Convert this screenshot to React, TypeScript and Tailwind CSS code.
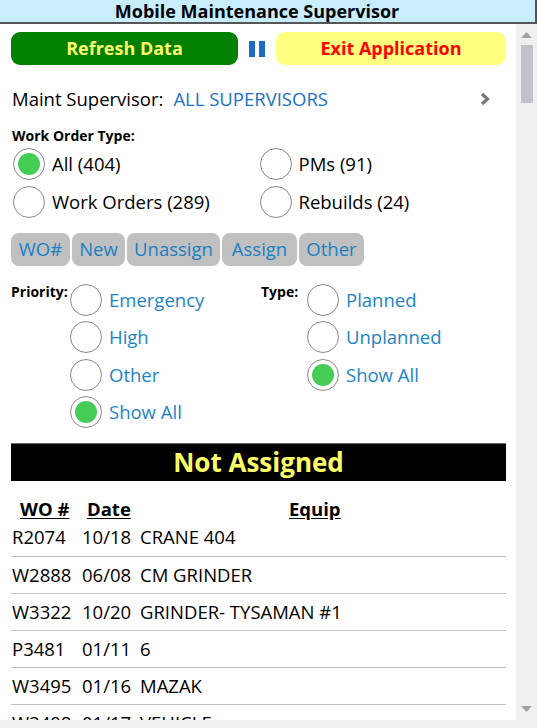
import { useState } from "react";

const font = { fontFamily: '"Open Sans", "Noto Sans", sans-serif' };

function Radio({ checked, label, blue, tall }: { checked?: boolean; label: string; blue?: boolean; tall?: boolean }) {
  return (
    <div className={`flex items-center ${tall ? "h-[38px]" : "h-[37.5px]"}`}>
      <div className="flex h-[32px] w-[32px] shrink-0 items-center justify-center rounded-full border-[1.5px] border-[#8a8a8a] bg-white">
        {checked && <div className="h-[22px] w-[22px] rounded-full bg-[#44cc55]"></div>}
      </div>
      <span className={`ml-[7px] text-[18.5px] ${blue ? "text-[#1c84c6]" : "text-black"}`}>{label}</span>
    </div>
  );
}

const rows = [
  ["R2074", "10/18", "CRANE 404"],
  ["W2888", "06/08", "CM GRINDER"],
  ["W3322", "10/20", "GRINDER- TYSAMAN #1"],
  ["P3481", "01/11", "6"],
  ["W3495", "01/16", "MAZAK"],
  ["W3498", "01/17", "VEHICLE"],
];

export default function App() {
  const [woType, setWoType] = useState("All");

  return (
    <div className="flex h-[728px] w-[537px] flex-col overflow-hidden bg-white" style={font}>
      {/* title bar */}
      <div className="flex h-[24px] shrink-0 items-center justify-center border-b-2 border-r-2 border-[#555] bg-[#c8eefc] pr-[21px]">
        <span className="text-[18px] font-bold leading-none text-black">Mobile Maintenance Supervisor</span>
      </div>

      <div className="flex min-h-0 flex-1">
        <div className="min-w-0 flex-1 overflow-hidden pl-[11px] pr-[10px]">
          {/* top buttons */}
          <div className="mt-[8px] flex h-[33px] items-center">
            <button className="h-full w-[227px] rounded-[9px] bg-[#008000] text-[18px] font-bold text-[#ffff66]">Refresh Data</button>
            <div className="mx-[11px] flex h-[16px] gap-[4px]">
              <div className="w-[6px] bg-[#1a6fc4]"></div>
              <div className="w-[6px] bg-[#1a6fc4]"></div>
            </div>
            <button className="h-full flex-1 rounded-[9px] bg-[#ffff80] text-[18px] font-bold text-[#ff0000]">Exit Application</button>
          </div>

          {/* supervisor */}
          <div className="mt-[20px] flex items-center pl-[1px]">
            <span className="text-[18.5px] text-black">Maint Supervisor:</span>
            <span className="ml-[10px] text-[18.5px] text-[#1a73c8]">ALL SUPERVISORS</span>
            <svg className="ml-auto mr-[16px]" width="10" height="14" viewBox="0 0 10 14">
              <path d="M2 2 L7.5 7 L2 12" stroke="#777" strokeWidth="3.2" fill="none" />
            </svg>
          </div>

          {/* work order type */}
          <div className="mt-[14px] pl-[1px] text-[14px] font-bold leading-[18px] text-black">Work Order Type:</div>
          <div className="grid grid-cols-2 pl-[2px]">
            {[
              ["All", "All (404)"],
              ["PMs", "PMs (91)"],
              ["WO", "Work Orders (289)"],
              ["Rebuilds", "Rebuilds (24)"],
            ].map(([k, l]) => (
              <div key={k} onClick={() => setWoType(k)}>
                <Radio tall checked={woType === k} label={l} />
              </div>
            ))}
          </div>

          {/* tab buttons */}
          <div className="mt-[12px] flex h-[33px] gap-[2px]">
            {["WO#", "New", "Unassign", "Assign", "Other"].map((t, i) => (
              <div
                key={t}
                className={`flex items-center justify-center rounded-[8px] bg-[#c0c0c0] text-[18.5px] text-[#1a80c4] ${
                  ["w-[59px]", "w-[53px]", "w-[93px]", "w-[75px]", "w-[65px]"][i]
                }`}
              >
                {t}
              </div>
            ))}
          </div>

          {/* priority / type */}
          <div className="mt-[18px] flex">
            <div className="flex w-[250px]">
              <span className="-mt-[1px] w-[59px] text-[14px] font-bold leading-[18px] text-black">Priority:</span>
              <div className="-mt-[3px]">
                <Radio label="Emergency" blue />
                <Radio label="High" blue />
                <Radio label="Other" blue />
                <Radio checked label="Show All" blue />
              </div>
            </div>
            <div className="flex">
              <span className="-mt-[1px] w-[46px] text-[14px] font-bold leading-[18px] text-black">Type:</span>
              <div className="-mt-[3px]">
                <Radio label="Planned" blue />
                <Radio label="Unplanned" blue />
                <Radio checked label="Show All" blue />
              </div>
            </div>
          </div>

          {/* not assigned */}
          <div className="mt-[12px] flex h-[38px] items-center justify-center border-t border-[#666] bg-black">
            <span className="text-[26px] font-bold leading-none text-[#ffff66]">Not Assigned</span>
          </div>

          <div className="mt-[17px] flex h-[22px] items-center text-[18.5px] font-bold text-black">
            <span className="ml-[9px] w-[67px] underline underline-offset-2">WO #</span>
            <span className="w-[202px] underline underline-offset-2">Date</span>
            <span className="underline underline-offset-2">Equip</span>
          </div>

          {rows.map(([wo, d, eq], i) => (
            <div
              key={wo}
              className={`flex h-[37px] items-center text-[18.5px] text-black ${i > 0 ? "border-t border-[#c0c0c0]" : "-mt-[1px]"}`}
            >
              <span className="ml-[1px] w-[70px]">{wo}</span>
              <span className="w-[58px]">{d}</span>
              <span>{eq}</span>
            </div>
          ))}
        </div>

        {/* scrollbar */}
        <div className="flex w-[21px] shrink-0 flex-col items-center bg-[#f0f0f0]">
          <svg className="mt-[8px]" width="11" height="6" viewBox="0 0 11 6">
            <path d="M0 6 L5.5 0 L11 6 Z" fill="#a3a3ad" />
          </svg>
          <div className="mt-[7px] h-[58px] w-[12px] bg-[#c1c1c9]"></div>
          <div className="flex-1"></div>
          <svg className="mb-[8px]" width="11" height="6" viewBox="0 0 11 6">
            <path d="M0 0 L11 0 L5.5 6 Z" fill="#a3a3ad" />
          </svg>
        </div>
      </div>

      <div className="h-[8px] shrink-0 bg-[#f0f0f0]"></div>
    </div>
  );
}
